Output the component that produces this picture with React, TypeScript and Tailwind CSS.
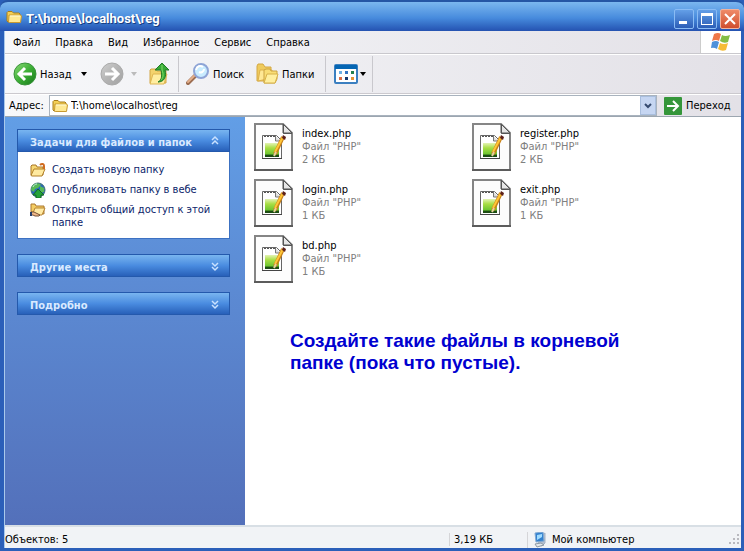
import type { ReactNode } from 'react';

const files = [
  { name: 'index.php', size: '2 КБ' },
  { name: 'register.php', size: '2 КБ' },
  { name: 'login.php', size: '1 КБ' },
  { name: 'exit.php', size: '1 КБ' },
  { name: 'bd.php', size: '1 КБ' },
];

function FolderIcon() {
  return (
    <svg className="h-4 w-4 shrink-0" viewBox="0 0 16 16" aria-hidden="true">
      <path d="M1 12V3.5L2 2.5h4l1.5 1.5H13l1 1v8H2z" fill="#f3cf55" stroke="#a77c1b" />
      <path d="M3 6h11.5l1 1-1 6.5H3.5L2.5 13z" fill="#ffe993" stroke="#c89a30" />
      <path d="M4 7h10" stroke="#fffbd8" />
    </svg>
  );
}

function NewFolderIcon() {
  return (
    <svg className="h-4 w-4" viewBox="0 0 16 16" aria-hidden="true">
      <path d="M1 13V4l1-1h4l1 2h6v8z" fill="#f7d875" stroke="#a87526" />
      <path d="M1 13.5 4 7h11l-3 7H2z" fill="#ffeaa0" stroke="#b28029" />
      <path d="M10 3c2-2 4-1 4 1v3" fill="none" stroke="#d06b20" strokeWidth="2" />
    </svg>
  );
}

function WebIcon() {
  return (
    <svg className="h-4 w-4" viewBox="0 0 16 16" aria-hidden="true">
      <circle cx="8" cy="8" r="7" fill="#2867bd" stroke="#416e74" />
      <path d="M2 4c3-4 7-3 9-1L8 6 5 7 4 10 1 8zM10 4l4 2v4l-3 1-1-3z" fill="#57b957" />
      <path d="m8 7 6 6h-3v3H6v-3H3z" fill="#25a338" stroke="#126b25" />
      <path d="M3 5c1-2 2-3 4-3" fill="none" stroke="#c3e8e6" />
    </svg>
  );
}

function ShareIcon() {
  return (
    <svg className="h-4 w-4" viewBox="0 0 16 16" aria-hidden="true">
      <path d="M1 10V2h4l1 2h8v8z" fill="#f4cd62" stroke="#ab7830" />
      <path d="M3 11 5 6h10l-3 7H4z" fill="#ffeaa5" stroke="#b88534" />
      <path d="M1 10h3l2 1 4 2-1 1H5l-2-1H1z" fill="#f1b98a" stroke="#755035" />
      <path d="M0 10h2v4H0z" fill="#263d6b" />
    </svg>
  );
}

function RoundArrow({ back }: { back?: boolean }) {
  return (
    <svg className="h-6 w-6" viewBox="0 0 24 24" aria-hidden="true">
      <defs>
        <linearGradient id={back ? 'greenBall' : 'grayBall'} x2="1" y2="1">
          <stop stopColor={back ? '#8ddc78' : '#d0d0d0'} />
          <stop offset=".5" stopColor={back ? '#3cae35' : '#b4b4b4'} />
          <stop offset="1" stopColor={back ? '#16791b' : '#a2a2a2'} />
        </linearGradient>
      </defs>
      <circle cx="12" cy="12" r="11" fill={back ? 'url(#greenBall)' : 'url(#grayBall)'} stroke={back ? '#39933a' : '#aaa'} />
      <path d={back ? 'M19 12H6m6-6-6 6 6 6' : 'M5 12h13m-6-6 6 6-6 6'} fill="none" stroke="white" strokeWidth="3" />
    </svg>
  );
}

function UpIcon() {
  return (
    <svg className="h-6 w-6" viewBox="0 0 24 24" aria-hidden="true">
      <path d="M2 21V8l1-1h5l1 2h9v12z" fill="#f3d36d" stroke="#d2a646" />
      <path d="m2 22 3-10h14l-3 10z" fill="#ffeea1" stroke="#dfb653" />
      <path d="M10 20c4-2 4-6 3-12H7l7-7 7 7h-4c2 7-1 12-7 12" fill="#36a936" stroke="#237b26" />
      <path d="M14 3v5c2 5 1 8-1 10" fill="none" stroke="#83dc68" />
    </svg>
  );
}

function SearchIcon() {
  return (
    <svg className="h-6 w-6" viewBox="0 0 24 24" aria-hidden="true">
      <path d="m10 13-8 8" stroke="#9b6c50" strokeWidth="4" strokeLinecap="round" />
      <path d="m9 13-7 7" stroke="#e4b08c" strokeWidth="2" strokeLinecap="round" />
      <circle cx="15" cy="9" r="7" fill="#c9ecff" stroke="#8ea4d6" strokeWidth="2" />
      <path d="M10 8c1-4 4-5 7-3M13 10c2 1 5 0 5-3" fill="none" stroke="white" strokeWidth="2" />
    </svg>
  );
}

function FoldersIcon() {
  return (
    <svg className="h-6 w-6" viewBox="0 0 24 24" aria-hidden="true">
      <path d="M2 19V4l1-2h5l2 3h6v14z" fill="#efcb5e" stroke="#d4a843" />
      <path d="m3 19 2-11h12v8z" fill="#ffe895" stroke="#ddb14c" />
      <path d="M9 21V8l2-1h4l1 2h6v8l-2 4z" fill="#f9dd75" stroke="#cca443" />
      <path d="m9 21 3-9h11l-3 9z" fill="#ffef9f" stroke="#d8b24b" />
    </svg>
  );
}

function ViewIcon() {
  return (
    <svg className="h-5 w-6" viewBox="0 0 24 20" aria-hidden="true">
      <rect x="1" y="1" width="22" height="18" rx="1" fill="white" stroke="#3b7fc0" strokeWidth="2" />
      <path d="M1 3h22" stroke="#0566b3" strokeWidth="4" />
      <path fill="#6dafe5" d="M5 7h3v3H5z" /><path fill="#3474c4" d="M11 7h3v3h-3z" /><path fill="#23804e" d="M17 7h3v3h-3z" />
      <path fill="#d86c46" d="M5 13h3v3H5z" /><path fill="#17366b" d="M11 13h3v3h-3z" /><path fill="#e39335" d="M17 13h3v3h-3z" />
    </svg>
  );
}

function WindowsFlag() {
  return (
    <svg className="h-5 w-5" viewBox="0 0 20 20" aria-hidden="true">
      <path d="M3 2q4-2 7 0L8 9Q5 7 1 9z" fill="#ee7748" />
      <path d="M11 3q3 2 8 0l-2 7q-4 2-8-1z" fill="#83bd45" />
      <path d="M1 10q4-2 7 0l-2 7q-3-2-6-1z" fill="#4f91d9" />
      <path d="M9 11q4 2 8 0l-2 7q-4 2-8-1z" fill="#f5bc37" />
    </svg>
  );
}

function FileIcon() {
  return (
    <svg className="h-12 w-10 shrink-0" viewBox="0 0 40 48" aria-hidden="true">
      <defs>
        <linearGradient id="notepad" x2="0" y2="1">
          <stop stopColor="#e4f3b4" />
          <stop offset=".35" stopColor="#a9de45" />
          <stop offset=".8" stopColor="#6cc52f" />
          <stop offset=".85" stopColor="#1c4d12" />
          <stop offset="1" stopColor="#1c4d12" />
        </linearGradient>
      </defs>
      <path d="M1 48V1h28l9 9v38" fill="#fdfdfd" stroke="#858585" strokeWidth="2" />
      <path d="M0 47h39" stroke="#5c5c5c" strokeWidth="2" />
      <path d="M29 1v9h9z" fill="#e6e6e6" stroke="#555" />
      <path d="M29.5 1v9.5H38" fill="none" stroke="#555" />
      <path d="M8.500 12.500h14l5 5v18h-19z" fill="white" stroke="#666" />
      <path d="M10 13.500h12" stroke="#555" strokeDasharray="2 1" />
      <path d="M21.500 13v5h5" fill="#ddd" stroke="#777" />
      <path d="M11 20h14v14H11z" fill="url(#notepad)" />
      <path d="M8 35.500h20" stroke="#444" />
      <path d="m21 31 8-17" stroke="#c88018" strokeWidth="4" />
      <path d="m21 29 8-15" stroke="#ffc637" strokeWidth="2" />
      <path d="m20 33 2-4" stroke="#e8d09c" strokeWidth="2" />
      <path d="m29 12 3 2-1 3-3-2z" fill="#5d201a" />
    </svg>
  );
}

function ComputerIcon() {
  return (
    <svg className="h-4 w-4" viewBox="0 0 16 16" aria-hidden="true">
      <path d="m10 3 3-2v10l-3 3-4-2z" fill="#b5bfce" stroke="#a5b3c4" />
      <path d="m3 1 8-1 1 9-8 1z" fill="#3281cf" stroke="#82a9d2" />
      <path d="m5 3 5-1v3L5 8z" fill="#a1dcff" />
      <path d="m3 12 6-1 3 2-7 2z" fill="#e4e8eb" stroke="#8c98a4" />
    </svg>
  );
}

function Caret({ muted }: { muted?: boolean }) {
  return (
    <svg className="h-1 w-2" viewBox="0 0 8 4" aria-hidden="true">
      <path d="M1 0h6L4 4z" fill={muted ? '#bbb' : '#000'} />
    </svg>
  );
}

function PanelHead({ title, open }: { title: string; open?: boolean }) {
  return (
    <button type="button" className="flex h-[23px] w-full items-center justify-between border border-[#2459ac] bg-linear-to-b from-[#79b5f0] via-[#4a8ce0] via-50% to-[#2860b9] pr-2 pl-3 text-[11px] font-bold text-[#d9eaff]">
      <span className="pt-1">{title}</span>
      <svg className={open ? 'h-3 w-3' : 'h-3 w-3 rotate-180'} viewBox="0 0 12 12" aria-hidden="true">
        <path d="m3 5 3-3 3 3M3 9l3-3 3 3" fill="none" stroke="#c9e1ff" strokeWidth="1.500" />
      </svg>
    </button>
  );
}

function Task({ icon, children }: { icon: ReactNode; children: ReactNode }) {
  return (
    <li>
      <a href="#task" className="flex gap-[6px]">
        <span className="h-4 w-4 shrink-0">{icon}</span>
        <span className="pt-px leading-[13px]">{children}</span>
      </a>
    </li>
  );
}

export default function App() {
  return (
    <div className="flex min-h-screen flex-col bg-[#2b5fb9] font-['DejaVu_Sans_Condensed','DejaVu_Sans',sans-serif] text-[11px] leading-[13px] text-black">
      <header className="flex h-[31px] items-center rounded-t-lg border-t-2 border-[#2556a5] bg-linear-to-b from-[#7bb7ef] via-[#478bdd] via-55% to-[#2552b1] pr-1 pl-[6px]">
        <FolderIcon />
        <h1 className="ml-1 flex-1 pt-1 font-[Roboto,sans-serif] text-[13px] leading-4 font-bold text-white [text-shadow:1px_1px_0_#173d82]">T:\home\localhost\reg</h1>
        <div className="flex gap-[3px] pt-1">
          <button type="button" aria-label="Свернуть" className="flex h-5 w-5 items-end rounded-xs border border-[#8abcf4] bg-linear-to-b from-[#649fe7] to-[#2c5eb7] p-1">
            <span className="h-[3px] w-2 bg-white" />
          </button>
          <button type="button" aria-label="Развернуть" className="flex h-5 w-5 items-center justify-center rounded-xs border border-[#8abcf4] bg-linear-to-b from-[#649fe7] to-[#2c5eb7]">
            <span className="h-3 w-3 border border-t-[3px] border-white" />
          </button>
          <button type="button" aria-label="Закрыть" className="flex h-5 w-5 items-center justify-center rounded-xs border border-[#f1b39d] bg-linear-to-b from-[#ef8b68] to-[#cf4d2d]">
            <svg className="h-3 w-3" viewBox="0 0 12 12" aria-hidden="true"><path d="m1 1 10 10M11 1 1 11" stroke="white" strokeWidth="2" /></svg>
          </button>
        </div>
      </header>

      <div className="mr-[3px] mb-[3px] ml-1 flex flex-1 flex-col border-l border-[#a9c9ec] bg-[#ededf0]">
        <div className="flex h-[23px] border-b border-[#c9c8cd] bg-linear-to-r from-[#f7f8fa] to-[#e3e1e7]">
          <nav aria-label="Меню" className="flex flex-1 items-center gap-[15px] pl-2">
            <button type="button">Файл</button>
            <button type="button">Правка</button>
            <button type="button">Вид</button>
            <button type="button">Избранное</button>
            <button type="button">Сервис</button>
            <button type="button">Справка</button>
          </nav>
          <div className="flex w-[41px] items-center justify-center border-l border-[#ccc] bg-white"><WindowsFlag /></div>
        </div>

        <div role="toolbar" aria-label="Инструменты" className="flex h-10 items-center border-t border-b border-t-white border-b-[#cbc9ce] bg-linear-to-r from-[#f7f8fa] to-[#e3e1e7] pl-2">
          <button type="button" className="flex w-[67px] items-center gap-[3px]"><RoundArrow back />Назад</button>
          <button type="button" aria-label="История назад" className="flex w-5 justify-start"><Caret /></button>
          <button type="button" aria-label="Вперёд" className="w-[30px]"><RoundArrow /></button>
          <button type="button" aria-label="История вперёд" className="w-[18px]"><Caret muted /></button>
          <button type="button" aria-label="Вверх" className="w-[30px]"><UpIcon /></button>
          <div className="mr-[7px] h-9 w-px bg-[#c9c8cd]" />
          <button type="button" className="flex w-[69px] items-center gap-[3px]"><SearchIcon />Поиск</button>
          <button type="button" className="flex w-[70px] items-center gap-[3px]"><FoldersIcon />Папки</button>
          <div className="mr-2 h-9 w-px bg-[#c9c8cd]" />
          <button type="button" aria-label="Вид" className="flex w-[38px] items-center gap-px"><ViewIcon /><Caret /></button>
          <div className="h-9 w-px bg-[#c9c8cd]" />
        </div>

        <form onSubmit={(event) => event.preventDefault()} className="flex h-[23px] items-center border-t border-b border-t-white border-b-[#9ca6b0] bg-linear-to-r from-[#f7f8fa] to-[#e3e1e7] pl-1">
          <label htmlFor="address" className="w-10">Адрес:</label>
          <div className="flex h-[21px] flex-1 items-center border border-[#a9b3be] bg-white pl-[2px]">
            <FolderIcon />
            <input id="address" defaultValue="T:\home\localhost\reg" className="ml-[3px] min-w-0 flex-1 bg-transparent outline-none" />
            <button type="button" aria-label="Список адресов" className="flex h-[19px] w-4 items-center justify-center border border-[#a9bedd] bg-[#c6d6f2]">
              <svg className="h-2 w-2" viewBox="0 0 8 8" aria-hidden="true"><path d="m1 2 3 3 3-3" fill="none" stroke="#364b70" strokeWidth="2" /></svg>
            </button>
          </div>
          <button type="submit" className="ml-[7px] flex w-[77px] items-center gap-1">
            <svg className="h-[18px] w-[18px]" viewBox="0 0 18 18" aria-hidden="true">
              <rect width="18" height="18" rx="1" fill="#35963a" />
              <path d="M3 9h11M9 4l5 5-5 5" fill="none" stroke="white" strokeWidth="2" />
            </svg>
            Переход
          </button>
        </form>

        <div className="flex flex-1 bg-white">
          <aside className="flex w-60 shrink-0 flex-col gap-[15px] bg-linear-to-b from-[#629ee6] to-[#5370ba] pt-3 pr-[15px] pl-3">
            <section>
              <PanelHead title="Задачи для файлов и папок" open />
              <ul className="flex h-[87px] flex-col gap-1 border border-t-0 border-[#3c71c2] bg-white pt-[10px] pr-2 pl-3 text-[#0a246a]">
                <Task icon={<NewFolderIcon />}>Создать новую папку</Task>
                <Task icon={<WebIcon />}>Опубликовать папку в вебе</Task>
                <Task icon={<ShareIcon />}>Открыть общий доступ к этой папке</Task>
              </ul>
            </section>
            <PanelHead title="Другие места" />
            <PanelHead title="Подробно" />
          </aside>

          <main className="flex-1 pt-[6px] pl-[9px]">
            <ul className="grid grid-cols-[repeat(2,218px)] gap-y-2">
              {files.map((file) => (
                <li key={file.name} className="flex h-12 gap-2">
                  <FileIcon />
                  <div className="pt-1 text-[#808080]">
                    <div className="text-black">{file.name}</div>
                    <div>Файл "PHP"</div>
                    <div>{file.size}</div>
                  </div>
                </li>
              ))}
            </ul>
            <p className="mt-[47px] ml-9 max-w-[350px] font-['Liberation_Sans',Arial,sans-serif] text-[19px] leading-[22px] font-bold text-[#0000d0]">
              Создайте такие файлы в корневой папке (пока что пустые).
            </p>
          </main>
        </div>

        <footer className="flex h-[23px] items-center border-t-2 border-[#d8dfe5] bg-[#f1f3f6] pt-1">
          <span className="flex-1">Объектов: 5</span>
          <span className="w-[78px] border-l border-[#d5d5d8] pl-1">3,19 КБ</span>
          <span className="flex w-[202px] items-center gap-1 border-l border-[#d5d5d8] pl-1"><ComputerIcon /><span>Мой компьютер</span></span>
          <svg className="h-3 w-3" viewBox="0 0 12 12" aria-hidden="true">
            <path fill="#b9b9bf" d="M8 0h2v2H8zM4 4h2v2H4zM8 4h2v2H8zM0 8h2v2H0zM4 8h2v2H4zM8 8h2v2H8z" />
          </svg>
        </footer>
      </div>
    </div>
  );
}
